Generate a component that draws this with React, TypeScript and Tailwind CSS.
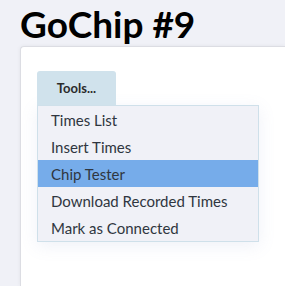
const items = ['Times List', 'Insert Times', 'Chip Tester', 'Download Recorded Times', 'Mark as Connected']

export default function App() {
  const active = 'Chip Tester'
  return <div className="min-h-[286px] bg-[#f0f1f7] pl-[20px] pt-[2px] font-['Lato','Liberation_Sans',sans-serif] text-[#2f3640]">
    <h1 className="text-[37px] leading-[44px] font-bold text-black">GoChip #9</h1>
    <div className="h-[240px] rounded-tl-[4px] border border-r-0 border-b-0 border-[#dcdde3] bg-white pl-[16px] pt-[24px] shadow-[0_0_4px_rgba(0,0,0,0.06)]">
      <button className="h-[34px] w-[79px] rounded-t-[3px] bg-[#d0e2ec] pt-[1px] text-[13px] font-bold text-[#2b2b2b]">
        Tools...
      </button>
      <ul className="w-[222px] border border-[#cfe0ea] bg-[#f0f1f7] shadow-[0_4px_16px_rgba(120,140,200,0.12)]">
        {items.map(item => <li key={item}
          className={'h-[27px] pl-[13px] pt-[1px] text-[15px] leading-[26px] ' + (item === active ? 'bg-[#76acea]' : '')}>
          {item}
        </li>)}
      </ul>
    </div>
  </div>
}
